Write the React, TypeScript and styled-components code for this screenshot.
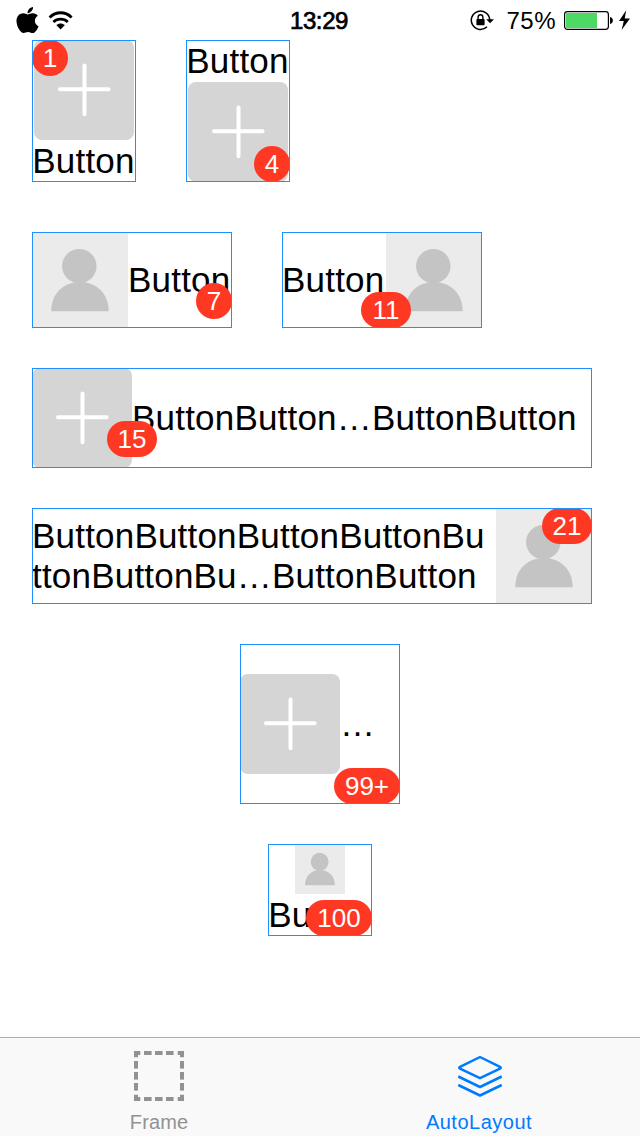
import React from 'react';
import styled, { createGlobalStyle, css } from 'styled-components';
import { FaApple } from 'react-icons/fa';

const GlobalStyle = createGlobalStyle`
  *, *::before, *::after { box-sizing: border-box; }
  body { margin: 0; background: #fff; font-family: 'Liberation Sans', Arial, sans-serif; }
  svg { display: block; flex: none; }
`;

const Screen = styled.div`
  width: 640px;
  height: 1136px;
  display: flex;
  flex-direction: column;
  overflow: hidden;
  background: #fff;
  color: #000;
`;

const StatusBar = styled.header`
  height: 40px;
  flex: none;
  display: grid;
  grid-template-columns: 1fr auto 1fr;
  align-items: center;
  padding: 0 10px 0 14px;
`;

const StatusGroup = styled.div<{ $end?: boolean }>`
  display: flex;
  align-items: center;
  justify-content: ${(p) => (p.$end ? 'flex-end' : 'flex-start')};
`;

const AppleLogo = styled(FaApple)`
  width: 27px;
  height: 30px;
  margin-right: 7px;
`;

const Clock = styled.div`
  font-size: 24px;
  line-height: 28px;
  padding-top: 1px;
  letter-spacing: -0.4px;
  margin-right: 6px;
  -webkit-text-stroke: 0.7px #000;
`;

const Percent = styled.div`
  font-size: 24px;
  line-height: 28px;
  padding-top: 1px;
  margin: 0 8px 0 12px;
  letter-spacing: 0.5px;
`;

const Content = styled.main`
  flex: 1;
  display: flex;
  flex-direction: column;
  gap: 40px;
  padding: 0 48px 0 32px;
`;

const ButtonRow = styled.div<{ $center?: boolean; $after?: number }>`
  display: flex;
  gap: 50px;
  margin-bottom: ${(p) => p.$after ?? 0}px;
  ${(p) => p.$center && css`
    justify-content: center;
    margin-left: -32px;
    margin-right: -48px;
  `}
`;

type Direction = 'row' | 'column';

const ImageButton = styled.div<{ $w: number; $h: number; $dir: Direction }>`
  position: relative;
  display: flex;
  flex: none;
  flex-direction: ${(p) => p.$dir};
  align-items: center;
  width: ${(p) => p.$w}px;
  height: ${(p) => p.$h}px;
  &::after {
    content: '';
    position: absolute;
    inset: 0;
    border: 1px solid #1e90ff;
  }
`;

const Title = styled.div<{ $lh?: number; $grow?: boolean; $stacked?: boolean }>`
  font-size: 35px;
  line-height: ${(p) => p.$lh ?? 42}px;
  letter-spacing: 0.2px;
  white-space: pre;
  ${(p) => p.$grow && css`flex: 1;`}
  ${(p) => p.$stacked && css`padding-right: 1px;`}
`;

const Badge = styled.span<{ $right: number; $top: number; $w?: number }>`
  position: absolute;
  top: ${(p) => p.$top}px;
  right: ${(p) => p.$right}px;
  width: ${(p) => p.$w ?? 36}px;
  height: 36px;
  border-radius: 18px;
  background: #ff3824;
  color: #fff;
  font-size: 26px;
  line-height: 36px;
  text-align: center;
`;

const TabBar = styled.nav`
  display: grid;
  grid-template-columns: 318px 322px;
  flex: none;
  height: 99px;
  border-top: 1px solid #adadad;
  background: #f9f9f9;
`;

const Tab = styled.div<{ $active?: boolean }>`
  display: flex;
  flex-direction: column;
  align-items: center;
  padding-top: 13px;
  padding-left: 0;
  padding-right: ${(p) => (p.$active ? 0 : 0)}px;
  padding-right: ${(p) => (p.$active ? 0 : 0)}px;
  color: ${(p) => (p.$active ? '#007aff' : '#929292')};
`;

const TabLabel = styled.span<{ $spacing: number }>`
  margin-top: 9px;
  font-size: 20px;
  line-height: 24px;
  letter-spacing: ${(p) => p.$spacing}px;
`;

const PlusTile = () => (
  <svg width="100" height="100" viewBox="0 0 100 100">
    <rect width="100" height="100" rx="8" fill="#d5d5d5" />
    <path d="M26 49.2H74.6M50.5 25.5V74.3" stroke="#fff" strokeWidth="4" strokeLinecap="round" />
  </svg>
);

const Avatar = ({ size = 96 }: { size?: number }) => (
  <svg width={size} height={size} viewBox="0 0 96 96">
    <rect width="96" height="96" fill="#ebebeb" />
    <circle cx="47.3" cy="34.2" r="17.2" fill="#c4c4c4" />
    <path d="M19.2 79.3C19.2 61.5 31.5 50 47.9 50S76.7 61.5 76.7 79.3Z" fill="#c4c4c4" />
  </svg>
);

const Wifi = () => (
  <svg width="26" height="20" viewBox="0 0 26 20" fill="none" stroke="#000" strokeWidth="2.8">
    <path d="M1.6 7.4C8 1.2 17.2 1.2 23.6 7.4" />
    <path d="M5.4 11.9C9.4 8.1 15.8 8.1 19.8 11.9" />
    <path d="M8.3 15C11 12.9 14.2 12.9 16.9 15L12.6 19.4Z" fill="#000" stroke="none" />
  </svg>
);

const RotationLock = () => (
  <svg width="24" height="24" viewBox="0 0 24 24" fill="none" stroke="#000">
    <path d="M17 18.8A9.2 9.2 0 1 1 19.7 12" strokeWidth="1.5" />
    <path d="M16.2 11.3H24L20.1 15.3Z" fill="#000" stroke="none" />
    <rect x="6.4" y="11" width="8.2" height="6.2" rx=".8" fill="#000" stroke="none" />
    <path d="M8.1 11V9.2a2.4 2.4 0 0 1 4.8 0V11" strokeWidth="1.4" />
  </svg>
);

const Battery = () => (
  <svg width="66" height="22" viewBox="0 0 66 22">
    <rect x=".6" y="2.6" width="43.8" height="17.8" rx="2.8" fill="none" stroke="#000" strokeWidth="1.2" />
    <rect x="2" y="4" width="31" height="15" fill="#4cd964" />
    <path d="M46 8C49.8 8.4 49.8 14.6 46 15Z" fill="#000" />
    <path d="M62.2 1.2L55 12.1H59.8L57.6 21L66 9.5H60.7Z" fill="#000" />
  </svg>
);

const dashes = [10, 21, 32];

const FrameIcon = () => (
  <svg width="50" height="50" viewBox="0 0 50 50" fill="currentColor">
    <path d="M0 0H6.3V4H4V6.3H0ZM50 0V6.3H46V4H43.7V0ZM0 50V43.7H4V46H6.3V50ZM50 50H43.7V46H46V43.7H50Z" />
    {dashes.map((d) => (
      <React.Fragment key={d}>
        <rect x={d} width="7.6" height="4" />
        <rect x={d} y="46" width="7.6" height="4" />
        <rect y={d} width="4" height="7.6" />
        <rect x="46" y={d} width="4" height="7.6" />
      </React.Fragment>
    ))}
  </svg>
);

const LayersIcon = () => (
  <svg width="52" height="50" viewBox="0 0 52 50" fill="none" stroke="currentColor" strokeWidth="2.5" strokeLinejoin="round">
    <path d="M27 6L47 15.8Q48.6 16.7 47 17.6L27 27.2L7 17.6Q5.4 16.7 7 15.8Z" />
    <path d="M5.3 25.5L27 36L48.7 25.5" />
    <path d="M5.3 34L27 44.5L48.7 34" />
  </svg>
);

export default function App() {
  return (
    <Screen>
      <GlobalStyle />
      <StatusBar>
        <StatusGroup>
          <AppleLogo />
          <Wifi />
        </StatusGroup>
        <Clock>13:29</Clock>
        <StatusGroup $end>
          <RotationLock />
          <Percent>75%</Percent>
          <Battery />
        </StatusGroup>
      </StatusBar>

      <Content>
        <ButtonRow $after={10}>
          <ImageButton $w={104} $h={142} $dir="column">
            <PlusTile />
            <Title $stacked>Button</Title>
            <Badge $right={68} $top={0}>1</Badge>
          </ImageButton>
          <ImageButton $w={104} $h={142} $dir="column">
            <Title $stacked>Button</Title>
            <PlusTile />
            <Badge $right={0} $top={106}>4</Badge>
          </ImageButton>
        </ButtonRow>

        <ButtonRow>
          <ImageButton $w={200} $h={96} $dir="row">
            <Avatar />
            <Title>Button</Title>
            <Badge $right={0} $top={51}>7</Badge>
          </ImageButton>
          <ImageButton $w={200} $h={96} $dir="row">
            <Title $grow>Button</Title>
            <Avatar />
            <Badge $right={71} $top={60} $w={50}>11</Badge>
          </ImageButton>
        </ButtonRow>

        <ButtonRow>
          <ImageButton $w={560} $h={100} $dir="row">
            <PlusTile />
            <Title>ButtonButton…ButtonButton</Title>
            <Badge $right={435} $top={53} $w={50}>15</Badge>
          </ImageButton>
        </ButtonRow>

        <ButtonRow>
          <ImageButton $w={560} $h={96} $dir="row">
            <Title $lh={40} $grow>{'ButtonButtonButtonButtonBu\nttonButtonBu…ButtonButton'}</Title>
            <Avatar />
            <Badge $right={0} $top={0} $w={50}>21</Badge>
          </ImageButton>
        </ButtonRow>

        <ButtonRow $center>
          <ImageButton $w={160} $h={160} $dir="row">
            <PlusTile />
            <Title>…</Title>
            <Badge $right={0} $top={124} $w={66}>99+</Badge>
          </ImageButton>
        </ButtonRow>

        <ButtonRow $center>
          <ImageButton $w={104} $h={92} $dir="column">
            <Avatar size={50} />
            <Title $stacked>Button</Title>
            <Badge $right={0} $top={56} $w={66}>100</Badge>
          </ImageButton>
        </ButtonRow>
      </Content>

      <TabBar>
        <Tab>
          <FrameIcon />
          <TabLabel $spacing={0.1}>Frame</TabLabel>
        </Tab>
        <Tab $active>
          <LayersIcon />
          <TabLabel $spacing={0.5}>AutoLayout</TabLabel>
        </Tab>
      </TabBar>
    </Screen>
  );
}
